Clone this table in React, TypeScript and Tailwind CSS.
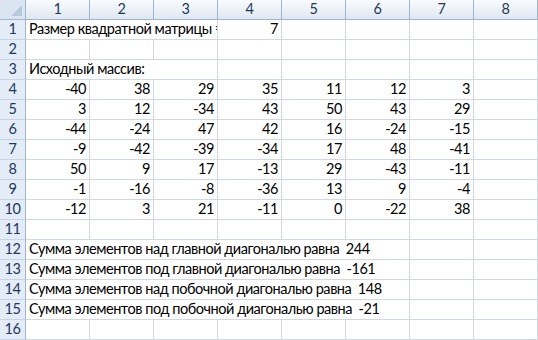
const matrix = [
    [-40, 38, 29, 35, 11, 12, 3],
    [3, 12, -34, 43, 50, 43, 29],
    [-44, -24, 47, 42, 16, -24, -15],
    [-9, -42, -39, -34, 17, 48, -41],
    [50, 9, 17, -13, 29, -43, -11],
    [-1, -16, -8, -36, 13, 9, -4],
    [-12, 3, 21, -11, 0, -22, 38],
];

const sums = [
    "Сумма элементов над главной диагональю равна  244",
    "Сумма элементов под главной диагональю равна  -161",
    "Сумма элементов над побочной диагональю равна  148",
    "Сумма элементов под побочной диагональю равна  -21",
];

const cols = [1, 2, 3, 4, 5, 6, 7, 8];

const RowHead = ({ n }: { n: number }) => (
    <div className="w-[26px] h-5 shrink-0 bg-[#e4ecf7] border-r border-b border-r-[#9eb6ce] border-b-[#c5d4e6] flex items-center justify-center text-[#1e395b]">
        {n}
    </div>
);

const Cell = ({ children, right, w = "w-16" }: { children?: React.ReactNode; right?: boolean; w?: string }) => (
    <div
        className={`${w} h-5 shrink-0 border-r border-b border-[#d0d7e5] flex items-end pb-[3px] overflow-hidden whitespace-pre ${
            right ? "justify-end pr-[3px]" : "justify-start pl-[3px]"
        }`}
    >
        {children}
    </div>
);

const Empty = ({ count }: { count: number }) => (
    <>
        {Array.from({ length: count }).map((_, i) => (
            <Cell key={i} />
        ))}
    </>
);

const App = () => {
    return (
        <div className="w-[538px] h-[340px] bg-white overflow-hidden font-['Lato','Open_Sans',sans-serif] text-[14.5px] tracking-[-0.45px] leading-none text-black">
            {/* column headers */}
            <div className="flex h-5">
                <div className="w-[26px] h-5 shrink-0 bg-[#dbe5f2] border-r border-b border-[#9eb6ce] relative">
                    <svg className="absolute right-[3px] bottom-[3px]" width="11" height="11" viewBox="0 0 11 11">
                        <polygon points="11,0 11,11 0,11" fill="#b7c8dd" />
                    </svg>
                </div>
                {cols.map((c) => (
                    <div
                        key={c}
                        className="w-16 h-5 shrink-0 bg-gradient-to-b from-[#f9fbfd] to-[#dfe7f2] border-r border-b border-[#9eb6ce] flex items-center justify-center text-[#1e395b]"
                    >
                        {c}
                    </div>
                ))}
            </div>

            {/* row 1 */}
            <div className="flex">
                <RowHead n={1} />
                <Cell w="w-[192px]">Размер квадратной матрицы =</Cell>
                <Cell right>7</Cell>
                <Empty count={4} />
            </div>

            {/* row 2 */}
            <div className="flex">
                <RowHead n={2} />
                <Empty count={8} />
            </div>

            {/* row 3 */}
            <div className="flex">
                <RowHead n={3} />
                <Cell w="w-[192px]">Исходный массив:</Cell>
                <Empty count={5} />
            </div>

            {/* rows 4-10 */}
            {matrix.map((row, i) => (
                <div key={i} className="flex">
                    <RowHead n={i + 4} />
                    {row.map((v, j) => (
                        <Cell key={j} right>
                            {v}
                        </Cell>
                    ))}
                    <Cell />
                </div>
            ))}

            {/* row 11 */}
            <div className="flex">
                <RowHead n={11} />
                <Empty count={8} />
            </div>

            {/* rows 12-15 */}
            {sums.map((s, i) => (
                <div key={i} className="flex">
                    <RowHead n={i + 12} />
                    <Cell w="w-[384px]">{s}</Cell>
                    <Empty count={2} />
                </div>
            ))}

            {/* row 16 */}
            <div className="flex">
                <RowHead n={16} />
                <Empty count={8} />
            </div>
        </div>
    );
};

export default App;
